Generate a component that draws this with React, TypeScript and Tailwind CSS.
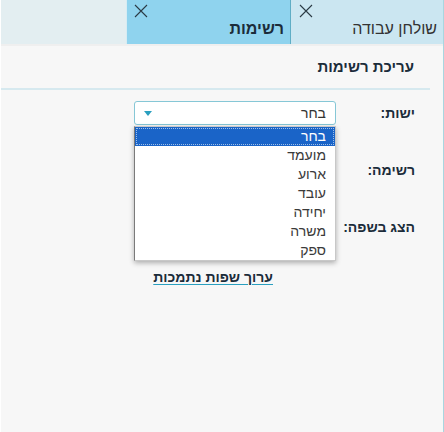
const options = ["בחר", "מועמד", "ארוע", "עובד", "יחידה", "משרה", "ספק"];

function CloseX() {
  return (
    <svg width="14" height="14" viewBox="0 0 14 14" className="block">
      <path d="M1 1 L13 13 M13 1 L1 13" stroke="#2b3a44" strokeWidth="1.1" fill="none" />
    </svg>
  );
}

function Arrow() {
  return (
    <svg width="8" height="5" viewBox="0 0 8 5" className="block">
      <path d="M0 0 H8 L4 5 Z" fill="#2a9fbf" />
    </svg>
  );
}

function SelectBox({ label }: { label: string }) {
  return (
    <div className="flex h-[24px] w-[202px] items-center justify-between rounded-[3px] border border-[#86c7d6] bg-white pl-[9px] pr-[9px]">
      <span className="text-[14px] text-[#333]">{label}</span>
      <Arrow />
    </div>
  );
}

export default function App() {
  return (
    <div
      dir="rtl"
      className="h-[432px] w-[444px] overflow-hidden bg-white"
      style={{ fontFamily: '"Liberation Sans", Arial, sans-serif' }}
    >
      <div className="h-full w-[443px] border-r border-[#a9d6e0] bg-[#f7f7f7]">
        {/* tabs */}
        <div className="flex h-[44px] bg-[#e3eef1]">
          <div className="relative h-full w-[152px] bg-[#cbe6f1]">
            <span className="absolute right-[6px] top-[17px] text-[16px] text-[#333]">שולחן עבודה</span>
            <span className="absolute left-[8px] top-[4px]">
              <CloseX />
            </span>
          </div>
          <div className="relative h-full w-[164px] border-r border-[#5fadc5] bg-[#8fd3ee]">
            <span className="absolute right-[6px] top-[17px] text-[16px] font-bold text-[#1b2c3a]">רשימות</span>
            <span className="absolute left-[7px] top-[4px]">
              <CloseX />
            </span>
          </div>
          <div className="h-full w-[1px] bg-[#d7ecf3]" />
        </div>
        <div className="h-[2px] bg-[#efefef]" />

        {/* heading */}
        <div className="flex h-[42px] items-center pr-[29px]">
          <h1 className="text-[15px] font-bold text-[#1b2c3a]">עריכת רשימות</h1>
        </div>
        <div className="ml-0 mr-[13px] h-[2px] bg-[#d6e9ef]" />

        {/* form */}
        <div className="flex flex-col gap-[33px] pr-[28px] pt-[11px]">
          <div className="flex items-center">
            <div className="w-[79px] text-[14px] font-bold text-[#1b2c3a]">ישות:</div>
            <div className="relative">
              <SelectBox label="בחר" />
              <div className="absolute right-0 top-[25px] z-10 w-[202px] border border-[#c8c8c8] border-l-[#7a7a7a] bg-white shadow-[0_2px_5px_rgba(0,0,0,0.3)]">
                {options.map((o, i) => (
                  <div
                    key={o}
                    className={
                      i === 0
                        ? "flex h-[19px] items-center bg-[#1a64c8] pr-[9px] text-[14px] text-white outline-1 outline-dotted outline-[#9fbfe8] -outline-offset-2"
                        : "flex h-[19px] items-center pr-[9px] text-[14px] text-[#3a3a3a]"
                    }
                  >
                    {o}
                  </div>
                ))}
              </div>
            </div>
          </div>
          <div className="flex items-center">
            <div className="w-[79px] text-[14px] font-bold text-[#1b2c3a]">רשימה:</div>
            <SelectBox label="" />
          </div>
          <div className="flex items-center">
            <div className="w-[79px] text-[14px] font-bold text-[#1b2c3a]">הצג בשפה:</div>
            <SelectBox label="" />
          </div>
          <div className="-mt-[7px] pr-[142px]">
            <a className="text-[14px] font-bold text-[#1b2c3a] underline decoration-[#2a9fbf] underline-offset-2">
              ערוך שפות נתמכות
            </a>
          </div>
        </div>
      </div>
    </div>
  );
}
